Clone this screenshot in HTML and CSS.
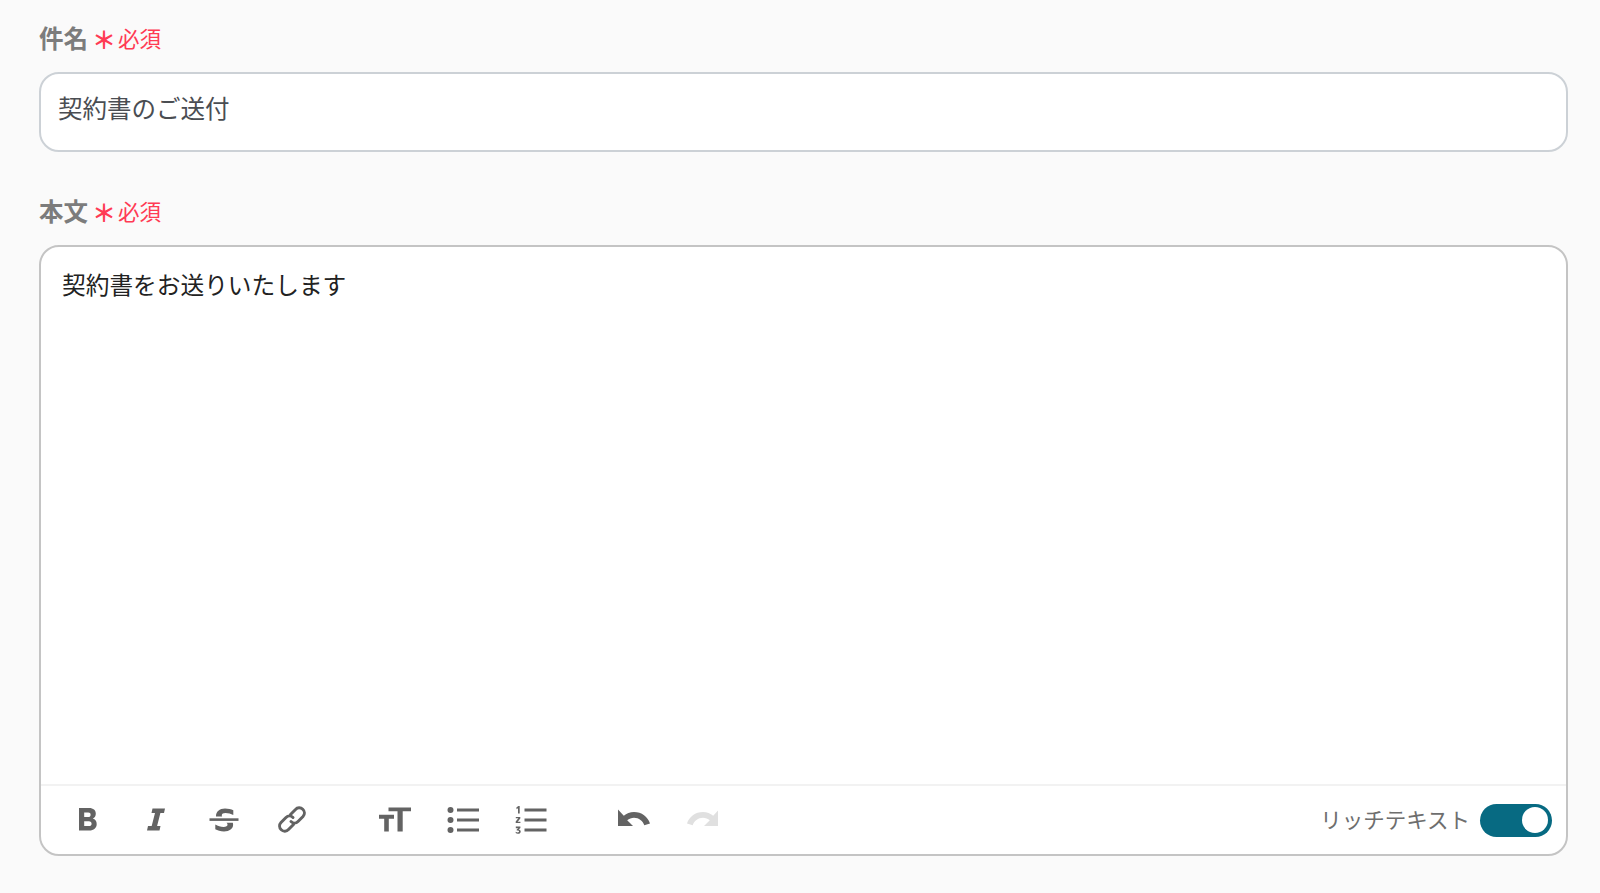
FILE: index.html
```html
<!DOCTYPE html>
<html lang="ja">
<head>
    <meta charset="UTF-8">
    <title>メール作成</title>
    <link rel="stylesheet" href="styles.css">
</head>
<body>
    <form class="mail-form">
        <div class="field">
            <div class="field-label">件名<span class="asterisk">＊</span><span class="required">必須</span></div>
            <div class="subject-input">契約書のご送付</div>
        </div>
        <div class="field">
            <div class="field-label">本文<span class="asterisk">＊</span><span class="required">必須</span></div>
            <div class="editor">
                <div class="editor-body">契約書をお送りいたします</div>
                <div class="toolbar">
                    <div class="tool-group">
                        <button type="button" class="tool-btn" aria-label="太字">
                            <svg viewBox="0 0 32 32"><path fill-rule="evenodd" d="M7 4h10.200c4 0 6.600 2.200 6.600 5.700 0 2.300-1.100 4-3 4.900 2.500.8 3.900 2.800 3.900 5.500 0 4-3 6.500-7.400 6.500H7zM12.200 8.600v4.500h4.100c1.500 0 2.300-.9 2.300-2.300s-.8-2.200-2.300-2.200zM12.200 17.300v4.800h4.700c1.700 0 2.700-.9 2.700-2.400s-1-2.400-2.700-2.400z"/></svg>
                        </button>
                        <button type="button" class="tool-btn" aria-label="斜体">
                            <svg viewBox="0 0 32 32"><path d="M12.500 4.500H25l-1 4.500h-3.600l-3.300 13h3.400l-1 4.500H7l1-4.500h3.700l3.300-13h-3.500z"/></svg>
                        </button>
                        <button type="button" class="tool-btn" aria-label="取り消し線">
                            <svg viewBox="0 0 32 32"><path d="M1.500 14.300h29v2.600h-29z"/><path d="M8 12.500c-.2-5 3.600-8 9-8 3.200 0 6.200.8 8.300 1.800v4.700c-2.300-1.200-5-2-7.800-2-2.200 0-3.700.8-3.700 2.300 0 .5.100.8.400 1.200zM24.800 18.800c.2.600.3 1.300.3 2 0 4-3.500 6.600-9.100 6.600-3.500 0-6.600-.9-8.700-2.100v-4.800c2.500 1.500 5.400 2.400 8.300 2.400 2.400 0 3.900-.8 3.900-2.200 0-.8-.3-1.400-1-1.900z"/></svg>
                        </button>
                        <button type="button" class="tool-btn" aria-label="リンク">
                            <svg viewBox="0 0 32 32" class="stroke-icon"><path d="M14.500 10.500 19.500 5.500a5 5 0 0 1 7.500 7l-5 5a5 5 0 0 1-7 0"/><path d="M17.500 20.500 12.500 25.500a5 5 0 0 1-7.500-7l5-5a5 5 0 0 1 7 0"/></svg>
                        </button>
                    </div>
                    <div class="tool-group">
                        <button type="button" class="tool-btn" aria-label="文字サイズ">
                            <svg viewBox="0 0 32 32"><path d="M9.500 3.500H32v3.800h-8.300V27.500h-5.200V7.300h-9z"/><path d="M0 10.800h15v4H9.800v12.700H5.200V14.800H0z"/></svg>
                        </button>
                        <button type="button" class="tool-btn" aria-label="箇条書き">
                            <svg viewBox="0 0 32 32"><circle cx="3.500" cy="6" r="3"/><circle cx="3.500" cy="16" r="3"/><circle cx="3.500" cy="26" r="3"/><path d="M10 4.500h23v3H10zM10 14.500h23v3H10zM10 24.500h23v3H10z"/></svg>
                        </button>
                        <button type="button" class="tool-btn" aria-label="番号付きリスト">
                            <svg viewBox="0 0 32 32"><path d="M9.500 4.500h22v3h-22zM9.500 14.500h22v3h-22zM9.500 24.500h22v3h-22z"/><path d="M1.500 3.300 3.500 2h1.200v7.500H3V4.300l-1.500.9zM.8 13h4.500v1.500l-2.600 3.200h2.700v1.300H.7v-1.400l2.600-3.300H.8zM.8 22.500h4.600v1.400l-1.700 1.500c1.200.1 2 .9 2 2 0 1.400-1.100 2.300-2.700 2.300-1 0-1.700-.2-2.300-.6v-1.400c.6.4 1.300.7 2.100.7.700 0 1.200-.3 1.200-.9s-.6-.9-1.500-.9h-.8v-1.200l1.500-1.200H.8z"/></svg>
                        </button>
                    </div>
                    <div class="tool-group">
                        <button type="button" class="tool-btn" aria-label="元に戻す">
                            <svg viewBox="0 0 32 32"><path d="M0 5.500V22h15l-5.800-5.800c1.900-1.600 4.300-2.500 6.800-2.500 4.900 0 9 3.300 10.300 7.500l5.700-1.700C30 12.800 23.600 8 16 8c-3.900 0-7.500 1.500-10.200 3.800z"/></svg>
                        </button>
                        <button type="button" class="tool-btn is-disabled" aria-label="やり直す">
                            <svg viewBox="0 0 32 32"><path d="M33 5.500V22H18l5.800-5.800c-1.900-1.600-4.300-2.500-6.800-2.500-4.900 0-9 3.300-10.300 7.500L1 19.500C3 12.800 9.400 8 17 8c3.900 0 7.500 1.500 10.200 3.800z"/></svg>
                        </button>
                    </div>
                    <div class="rich-toggle">
                        <span class="rich-label">リッチテキスト</span>
                        <span class="switch"><span class="switch-knob"></span></span>
                    </div>
                </div>
            </div>
        </div>
    </form>
</body>
</html>
```

FILE: styles.css
```css
* { box-sizing: border-box; }
html, body { height: 100%; }
body { margin: 0; background: #fafafa; font-family: "Noto Sans CJK JP", "Noto Sans", sans-serif; overflow: hidden; }
.mail-form { padding: 19px 32px 0 39px; }
.field { margin-bottom: 40px; }
.field-label { display: flex; align-items: center; height: 36px; margin-bottom: 17px; font-size: 24.500px; font-weight: 700; color: #7c7c7c; white-space: pre; }
.asterisk { width: 24px; margin-left: 4px; text-align: center; font-size: 24px; font-weight: 700; line-height: 36px; padding-top: 4px; color: #ff3b54; }
.required { margin-left: 2px; font-size: 21.500px; font-weight: 400; color: #ff3b54; }
.subject-input { height: 80px; padding: 14px 17px; background: #fff; border: 2px solid #ccd1d6; border-radius: 20px; font-size: 24.500px; line-height: 40px; color: #4a4d52; }
.editor { height: 611px; display: flex; flex-direction: column; background: #fff; border: 2px solid #c4c4c4; border-radius: 20px; }
.editor-body { flex: 1; padding: 17px 21px; font-size: 23.700px; line-height: 40px; color: #222; }
.toolbar { height: 70px; display: flex; align-items: center; padding: 0 14px 0 13px; border-top: 2px solid #f2f2f2; }
.tool-group { display: flex; margin-right: 35px; }
.tool-btn { width: 68px; height: 40px; display: flex; align-items: center; justify-content: center; padding: 0; background: none; border: none; fill: #636363; }
.tool-btn svg { width: 32px; height: 32px; }
.stroke-icon { fill: none; stroke: #636363; stroke-width: 3; stroke-linecap: round; }
.is-disabled { fill: #e0e0e0; }
.rich-toggle { display: flex; align-items: center; margin-left: auto; }
.rich-label { margin-right: 10px; padding-bottom: 3px; font-size: 21.500px; font-weight: 400; color: #6e6e6e; }
.switch { width: 72px; height: 33px; display: flex; align-items: center; justify-content: flex-end; padding-right: 4px; background: #076a82; border-radius: 17px; }
.switch-knob { width: 26px; height: 26px; background: #fff; border-radius: 50%; }
```
